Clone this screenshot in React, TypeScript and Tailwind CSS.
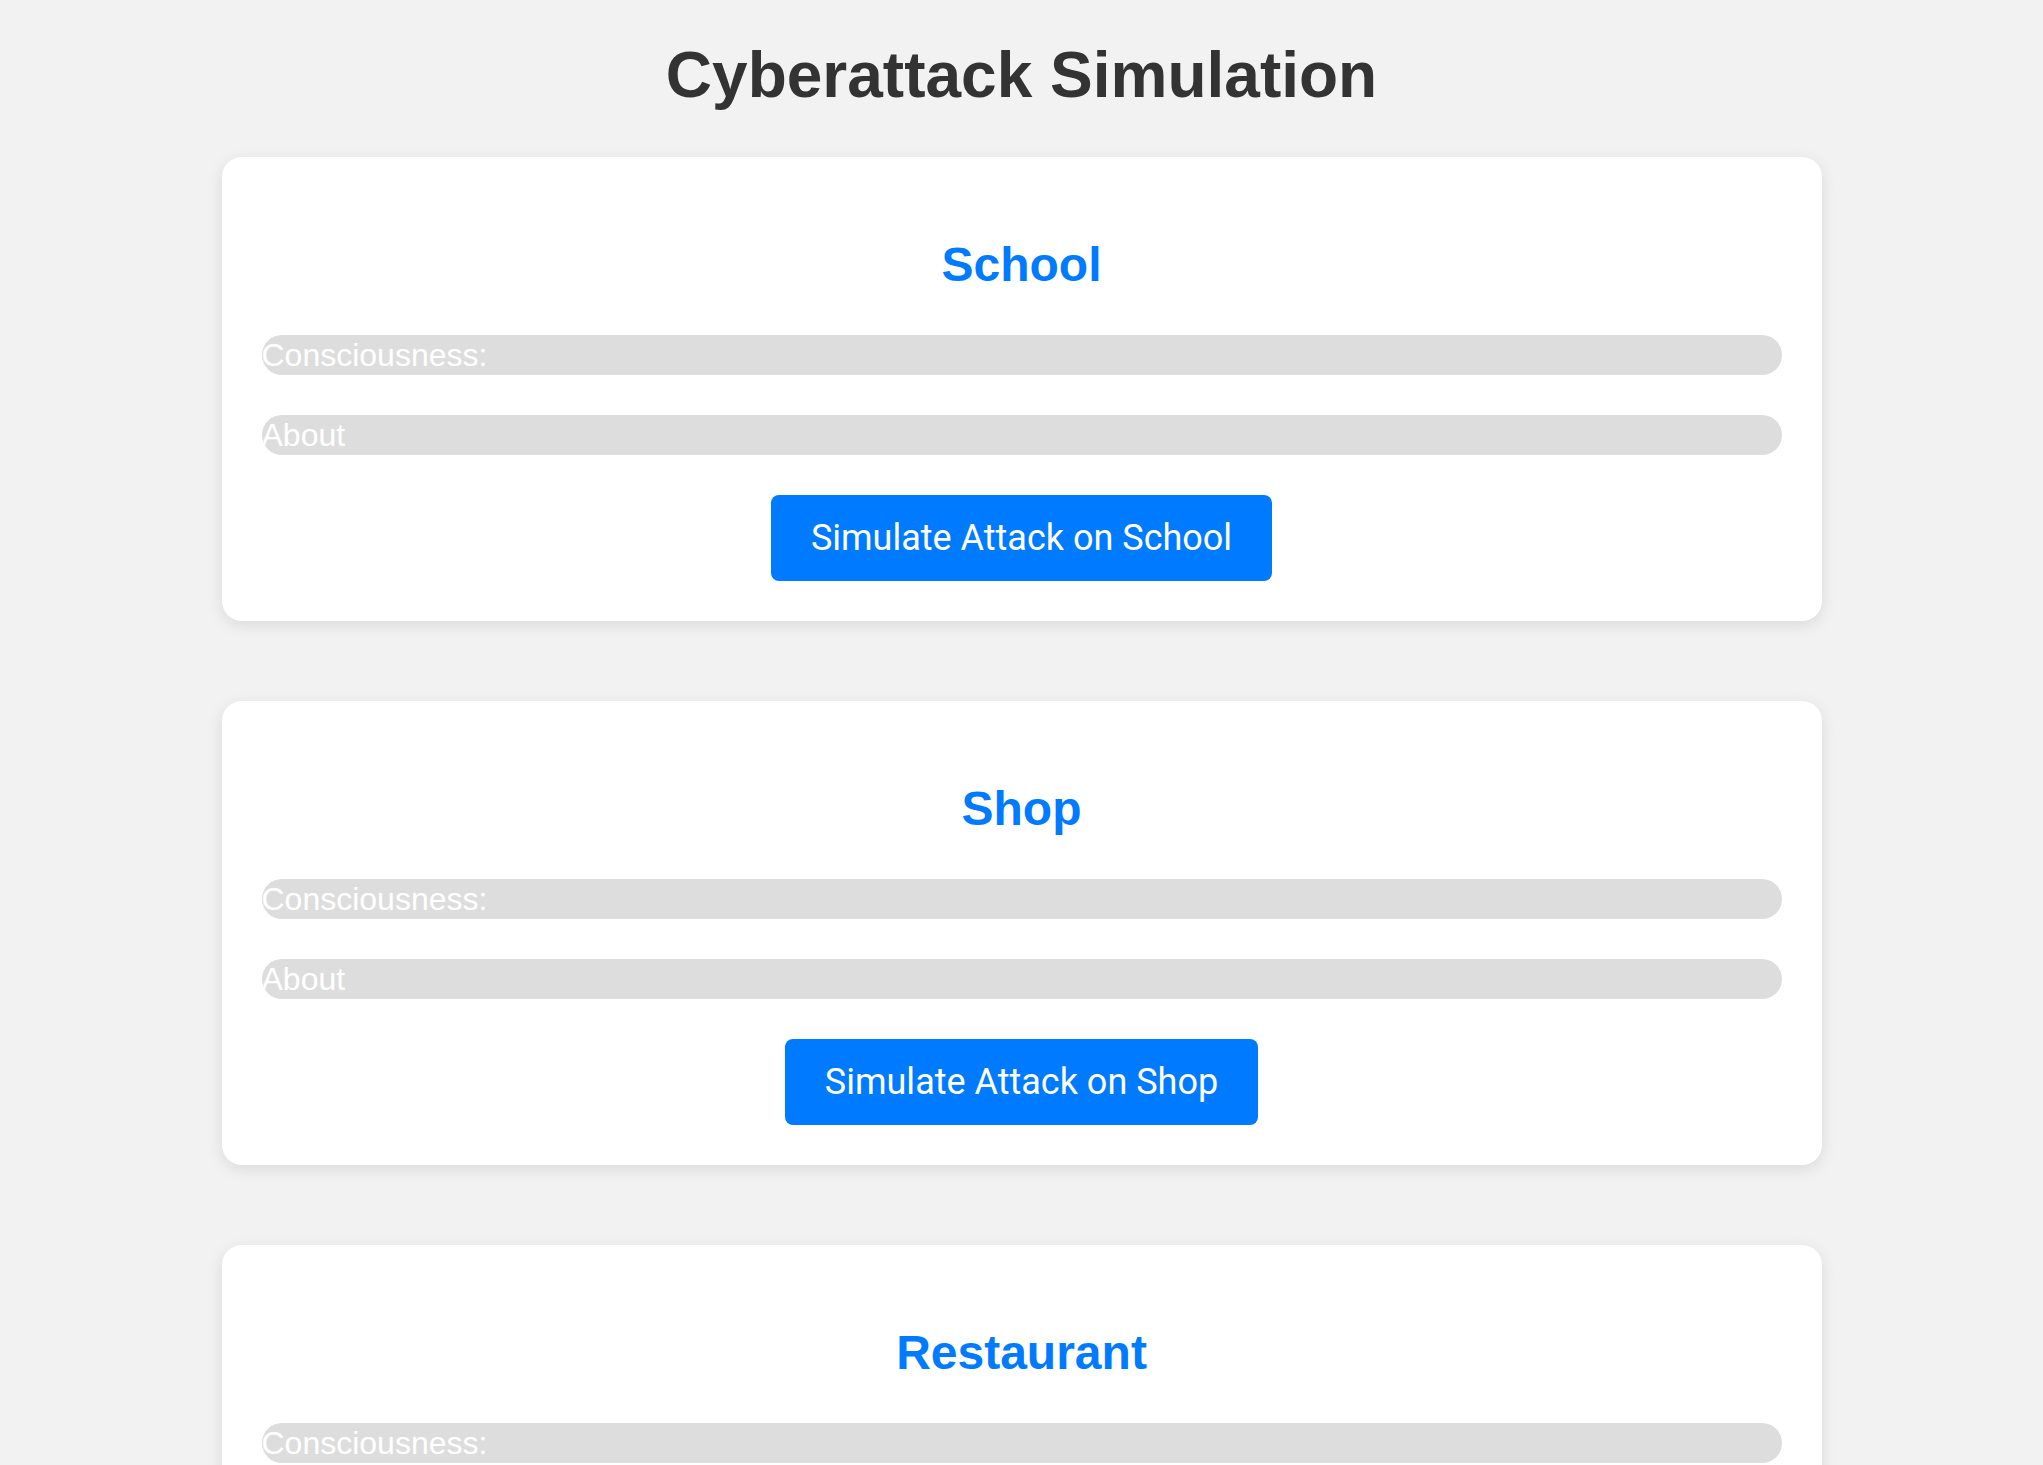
import React from 'react'

const targets = ['School', 'Shop', 'Restaurant']

function TargetCard({ name }: { name: string }) {
  return (
    <div className="flex flex-col items-center rounded-[20px] bg-white p-10 shadow-[0_4px_16px_rgba(0,0,0,0.1)]">
      <h2 className="mt-[44px] text-[48px] leading-[48px] font-bold text-[#007bff]">{name}</h2>
      {/* status bars */}
      <div className="mt-[46px] flex w-full flex-col gap-10">
        <div className="h-10 overflow-hidden rounded-full bg-[#dddddd] text-[32px] leading-10 whitespace-nowrap text-white">
          Consciousness:
        </div>
        <div className="h-10 overflow-hidden rounded-full bg-[#dddddd] text-[32px] leading-10 whitespace-nowrap text-white">
          About
        </div>
      </div>
      <button className="mt-10 h-[86px] rounded-lg bg-[#007bff] px-10 font-['Roboto',sans-serif] text-[36px] text-white">
        Simulate Attack on {name}
      </button>
    </div>
  )
}

export default function App() {
  return (
    <div className="min-h-screen bg-[#f2f2f2] pt-[39px] pb-10 font-['Liberation_Sans',Arial,sans-serif]">
      <h1 className="text-center text-[64px] leading-[72px] font-bold text-[#333333]">Cyberattack Simulation</h1>
      <div className="mx-auto mt-[46px] flex w-[1600px] flex-col gap-20">
        {targets.map((t) => (
          <TargetCard key={t} name={t} />
        ))}
      </div>
    </div>
  )
}
